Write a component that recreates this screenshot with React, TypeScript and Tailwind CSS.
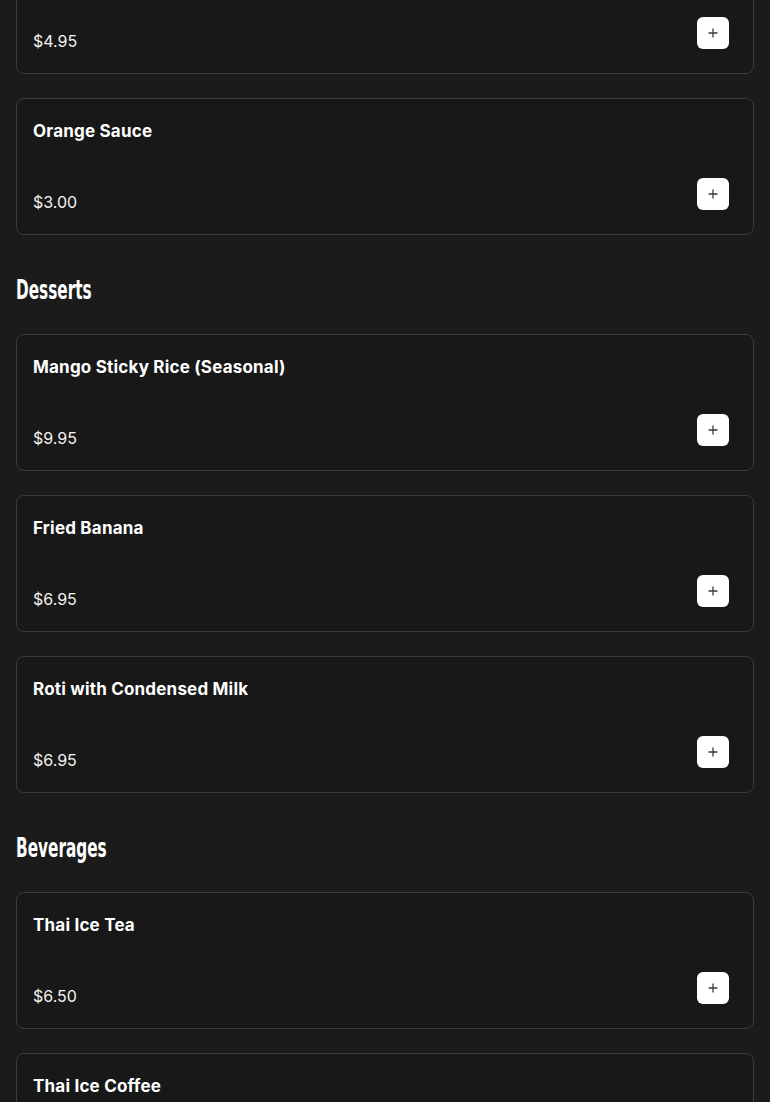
import React from "react";

type Item = { name: string; price: string };

const sections: { title?: string; items: Item[] }[] = [
  {
    items: [
      { name: "Peanut Sauce", price: "$4.95" },
      { name: "Orange Sauce", price: "$3.00" },
    ],
  },
  {
    title: "Desserts",
    items: [
      { name: "Mango Sticky Rice (Seasonal)", price: "$9.95" },
      { name: "Fried Banana", price: "$6.95" },
      { name: "Roti with Condensed Milk", price: "$6.95" },
    ],
  },
  {
    title: "Beverages",
    items: [
      { name: "Thai Ice Tea", price: "$6.50" },
      { name: "Thai Ice Coffee", price: "$6.50" },
      { name: "Soda", price: "$2.50" },
    ],
  },
];

function PlusIcon() {
  return (
    <svg width="10" height="10" viewBox="0 0 10 10" fill="none">
      <path d="M5 0.5V9.5M0.5 5H9.5" stroke="#3a3a3a" strokeWidth="1.3" />
    </svg>
  );
}

function Card({ item }: { item: Item }) {
  return (
    <div className="flex flex-col rounded-lg border border-[#3b3b3b] bg-[#181818] p-4">
      <div className="mt-0.5 text-[17px] font-bold leading-7 tracking-[0.2px] text-white">{item.name}</div>
      <div className="mt-[33px] flex items-end justify-between">
        <div className="mb-1 text-[16px] leading-6 text-[#f2f2f2]">{item.price}</div>
        <button className="mb-2 mr-2 flex h-8 w-8 items-center justify-center rounded-md bg-white">
          <PlusIcon />
        </button>
      </div>
    </div>
  );
}

export default function App() {
  return (
    <div
      className="min-h-screen overflow-hidden bg-[#1b1b1b] px-4 pb-10"
      style={{ fontFamily: "Inter, 'Noto Sans', sans-serif" }}
    >
      <div className="-mt-[63px]">
        {sections.map((s, i) => (
          <section key={i}>
            {s.title && (
              <h2
                className="mb-[26px] mt-[37px] origin-left scale-x-[0.63] text-[27px] font-bold leading-9 text-white"
                style={{ fontFamily: "'Liberation Sans Narrow', 'DejaVu Sans Condensed', sans-serif" }}
              >
                {s.title}
              </h2>
            )}
            <div className="flex flex-col gap-6">
              {s.items.map((it) => (
                <Card key={it.name} item={it} />
              ))}
            </div>
          </section>
        ))}
      </div>
    </div>
  );
}
